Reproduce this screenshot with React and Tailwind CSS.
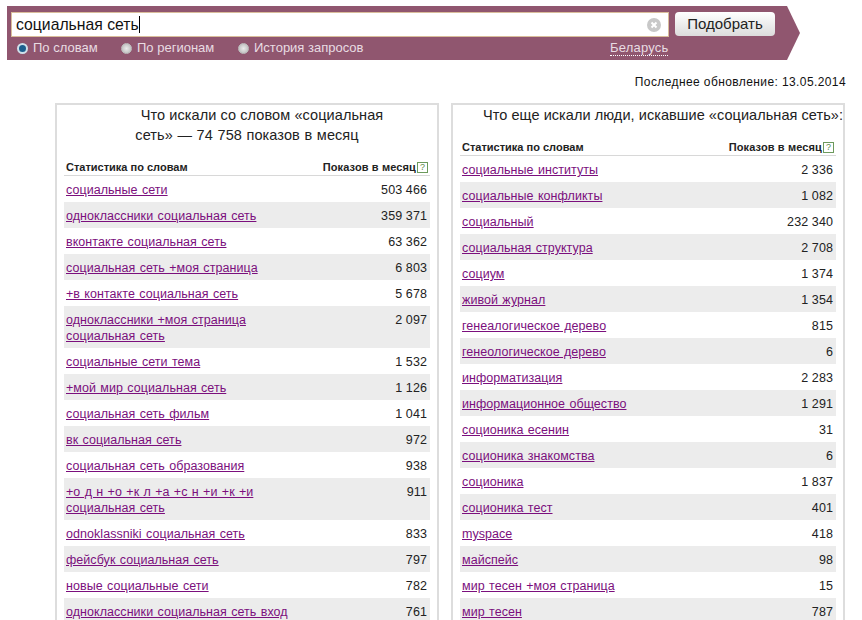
import React from "react";

const leftRows = [
  ["социальные сети", "503 466"],
  ["одноклассники социальная сеть", "359 371"],
  ["вконтакте социальная сеть", "63 362"],
  ["социальная сеть +моя страница", "6 803"],
  ["+в контакте социальная сеть", "5 678"],
  ["одноклассники +моя страница социальная сеть", "2 097"],
  ["социальные сети тема", "1 532"],
  ["+мой мир социальная сеть", "1 126"],
  ["социальная сеть фильм", "1 041"],
  ["вк социальная сеть", "972"],
  ["социальная сеть образования", "938"],
  ["+о д н +о +к л +а +с н +и +к +и социальная сеть", "911"],
  ["odnoklassniki социальная сеть", "833"],
  ["фейсбук социальная сеть", "797"],
  ["новые социальные сети", "782"],
  ["одноклассники социальная сеть вход", "761"],
];

const rightRows = [
  ["социальные институты", "2 336"],
  ["социальные конфликты", "1 082"],
  ["социальный", "232 340"],
  ["социальная структура", "2 708"],
  ["социум", "1 374"],
  ["живой журнал", "1 354"],
  ["генеалогическое дерево", "815"],
  ["генеологическое дерево", "6"],
  ["информатизация", "2 283"],
  ["информационное общество", "1 291"],
  ["соционика есенин", "31"],
  ["соционика знакомства", "6"],
  ["соционика", "1 837"],
  ["соционика тест", "401"],
  ["myspace", "418"],
  ["майспейс", "98"],
  ["мир тесен +моя страница", "15"],
  ["мир тесен", "787"],
];

function Radio({ checked, label, className }) {
  return (
    <label className={`flex items-center gap-[5px] ${className}`}>
      <span
        className={
          checked
            ? "w-[11px] h-[11px] rounded-full border-2 border-[#cfe0ea] bg-[#1c5f8e]"
            : "w-[11px] h-[11px] rounded-full border border-[#bdbdbd] bg-radial from-[#ececec] to-[#b4b4b4]"
        }
      />
      <span>{label}</span>
    </label>
  );
}

function StatTable({ rows }) {
  return (
    <div>
      <div className="flex justify-between items-center h-[19px] pt-[2px] border-b border-[#d8d8d8] px-0.5 text-[11px] font-bold text-[#222]">
        <span>Статистика по словам</span>
        <span className="flex items-center gap-[1px] tracking-[0.13px]">
          Показов в месяц
          <span className="w-[11px] h-[11px] border border-[#6c9a5c] text-[#5b8a4c] text-[9px] leading-[9px] text-center font-normal">
            ?
          </span>
        </span>
      </div>
      {rows.map((row, i) => (
        <div
          key={i}
          className={`flex justify-between pt-[6px] pb-[4px] pl-0.5 pr-[3px] text-[12.5px] leading-[16px] ${
            i % 2 === 1 ? "bg-[#ececec]" : "bg-white"
          }`}
        >
          <a href="#" className="w-[240px] text-[#7b0f7d] underline tracking-[0.05px] [word-spacing:0.8px]">
            {row[0]}
          </a>
          <span className="text-[#222] tracking-[0.1px]">{row[1]}</span>
        </div>
      ))}
    </div>
  );
}

export default function App() {
  return (
    <div className="w-[862px] h-[620px] overflow-hidden bg-white font-['Liberation_Sans',sans-serif] text-[#111]">
      <div className="flex ml-[7px] mt-[6px] h-[54px]">
        <div className="w-[780px] bg-[#90566f] pl-1 pt-1.5">
          <div className="flex items-start">
            <div className="flex items-center justify-between w-[658px] h-[25px] bg-white border border-[#d9bd9a] pl-1 pr-[7px]">
              <span className="flex items-center text-[15.75px]">
                социальная сеть
                <span className="w-px h-[17px] bg-black" />
              </span>
              <svg width="14" height="14" viewBox="0 0 14 14">
                <circle cx="7" cy="7" r="7" fill="#c8c8c8" />
                <path d="M4.5 4.5l5 5M9.500 4.500l-5 5" stroke="#fff" strokeWidth="2" />
              </svg>
            </div>
            <button className="ml-[6px] w-[100px] h-[24px] bg-gradient-to-b from-white to-[#dcdcdc] rounded-sm text-[15px] text-[#222]">
              Подобрать
            </button>
          </div>
          <div className="flex items-center h-[22px] text-[13px] text-[#e8dce2]">
            <Radio checked label="По словам" className="ml-[6px] w-[104px]" />
            <Radio label="По регионам" className="w-[117px]" />
            <Radio label="История запросов" className="w-[372px]" />
            <span className="border-b border-dotted border-white leading-[14px] tracking-[0.2px]">Беларусь</span>
          </div>
        </div>
        <svg width="13" height="54" viewBox="0 0 13 54" className="block">
          <polygon points="0,0 13,27 0,54" fill="#90566f" />
        </svg>
      </div>
      <div className="flex justify-end pr-4 mt-[14px] h-[16px] text-[12px] leading-[16px] tracking-[0.4px]">
        Последнее обновление: 13.05.2014
      </div>
      <div className="flex items-start mt-[13px] ml-[55px] gap-3">
        <div className="w-[384px] h-[600px] border-2 border-[#dddddd] px-[7px]">
          <div className="h-[52px] text-center text-[14.5px] leading-[20px] tracking-[0.08px] text-[#222]">
            <span className="block pl-[30px]">Что искали со словом «социальная</span>
            <span className="block [word-spacing:0.5px]">сеть» — 74 758 показов в месяц</span>
          </div>
          <StatTable rows={leftRows} />
        </div>
        <div className="w-[394px] h-[600px] border-2 border-[#dddddd] px-[7px]">
          <div className="h-[32px] pl-[23px] whitespace-nowrap text-[14.5px] leading-[20px] tracking-[0.06px] text-[#222]">
            Что еще искали люди, искавшие «социальная сеть»:
          </div>
          <StatTable rows={rightRows} />
        </div>
      </div>
    </div>
  );
}
